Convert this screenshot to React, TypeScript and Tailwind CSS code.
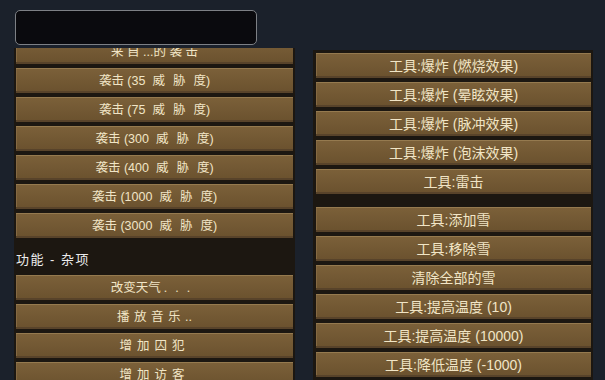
import React from 'react';

const font = "font-['Liberation_Sans','Noto_Sans_CJK_SC',sans-serif]";

type BtnProps = { children: React.ReactNode; className?: string };

const Btn: React.FC<BtnProps> = ({ children, className = '' }) => (
  <div
    className={`h-[25px] shrink-0 flex items-center justify-center bg-linear-to-b from-[#7b6039] to-[#6a512e] border-t border-[#957a4f] shadow-[inset_0_-2px_0_#58432a,inset_1px_0_0_#846943] leading-none text-[#f1e5c6] whitespace-pre ${className}`}
  >
    {children}
  </div>
);

// threat level raids, the "威胁度" glyphs are spread out in the game font
const Raid: React.FC<{ n: string }> = ({ n }) => (
  <Btn className="text-[12.5px]">
    袭击 ({n}
    <span className="ml-[7px] tracking-[8px]">威胁</span>度)
  </Btn>
);

const rightTools = [
  '工具:爆炸 (燃烧效果)',
  '工具:爆炸 (晕眩效果)',
  '工具:爆炸 (脉冲效果)',
  '工具:爆炸 (泡沫效果)',
  '工具:雷击',
];

const rightWeather = [
  '工具:添加雪',
  '工具:移除雪',
  '清除全部的雪',
  '工具:提高温度 (10)',
  '工具:提高温度 (10000)',
  '工具:降低温度 (-1000)',
];

export default function App() {
  return (
    <div className={`w-[605px] h-[380px] overflow-hidden bg-[#1b212b] ${font}`}>
      {/* search box */}
      <div className="pl-[15px] pt-[10px]">
        <div className="w-[242px] h-[35px] rounded-[5px] border-[1.5px] border-[#7d8085] bg-[#0a0a0e]" />
      </div>

      <div className="flex pl-[14px] mt-[3px] gap-[18px] h-[332px]">
        {/* left column, scrolled so the first row sits under the search box */}
        <div className="w-[281px] h-full overflow-hidden bg-[#1c1711]">
          <div className="-mt-[9px] px-[2px] flex flex-col gap-[4px]">
            <Btn className="text-[12.5px]">来 自 ...的 袭 击</Btn>
            {['35', '75', '300', '400', '1000', '3000'].map((n) => (
              <Raid key={n} n={n} />
            ))}
            <div className="h-[29px] pt-[6px] flex items-center text-[13px] leading-none text-[#ececec] tracking-[1.5px] whitespace-pre">
              功能 - 杂项
            </div>
            <Btn className="text-[12.5px]">
              改变天气<span className="ml-[3px] tracking-[8px]">...</span>
            </Btn>
            <Btn className="text-[12.5px]">
              <span className="tracking-[4.5px]">播放音乐</span>..
            </Btn>
            <Btn className="text-[12.5px] tracking-[5px]">增加囚犯</Btn>
            <Btn className="text-[12.5px] tracking-[5px]">增加访客</Btn>
          </div>
        </div>

        {/* right column */}
        <div className="w-[280px] h-full mt-[2px] bg-[#1c1711] pt-[3px] pl-[3px] pr-[2px] flex flex-col gap-[4px]">
          {rightTools.map((t) => (
            <Btn key={t} className="text-[14px]">
              {t}
            </Btn>
          ))}
          {rightWeather.map((t, i) => (
            <Btn key={t} className={`text-[14px] ${i === 0 ? 'mt-[9px]' : ''}`}>
              {t}
            </Btn>
          ))}
        </div>
      </div>
    </div>
  );
}
